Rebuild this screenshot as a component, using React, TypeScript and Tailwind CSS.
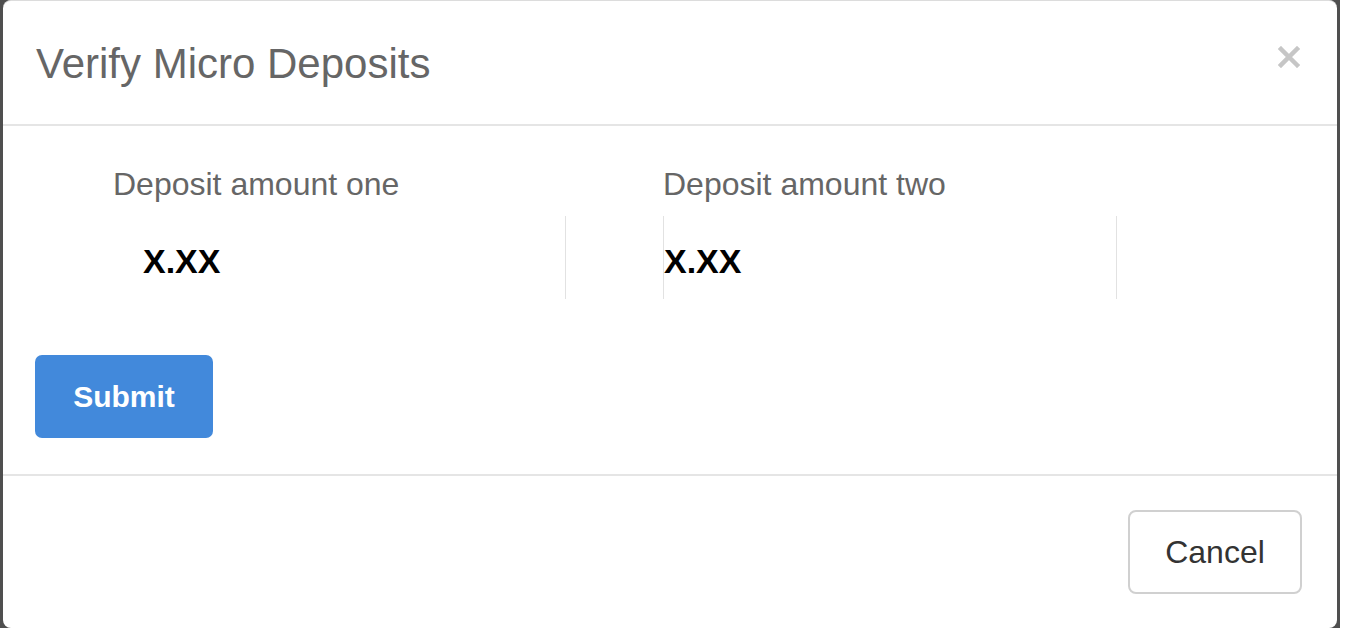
import React from 'react';

const CloseIcon: React.FC = () => (
  <svg width="22" height="22" viewBox="0 0 22 22" className="mt-[3px]">
    <path d="M3 3 L19 19 M19 3 L3 19" stroke="#c6c6c6" strokeWidth="4.5" strokeLinecap="square" />
  </svg>
);

const App: React.FC = () => {
  return (
    <div className="w-[1340px] h-[628px] bg-[#4f4f4f] font-['Liberation_Sans',Arial,sans-serif]">
      <div className="ml-[3px] w-[1334px] h-full bg-white rounded-[8px] border-t border-[#dcdcdc] flex flex-col">
        <div className="h-[125px] border-b-2 border-[#e5e5e5] flex justify-between items-start pt-[42px] pl-[33px] pr-[37px]">
          <h4 className="text-[42px] leading-none text-[#666666]">Verify Micro Deposits</h4>
          <CloseIcon />
        </div>

        <div className="pt-[42px] pb-[36px] pl-[32px]">
          <div className="flex pl-[78px]">
            <div className="w-[550px]">
              <label className="block text-[32px] leading-none text-[#666666]">Deposit amount one</label>
              <div className="mt-[16px] w-[453px] h-[83px] border-r border-[#e2e2e2] pt-[28px] pl-[30px]">
                <span className="text-[34px] leading-none font-bold text-black">X.XX</span>
              </div>
            </div>
            <div className="w-[550px]">
              <label className="block text-[32px] leading-none text-[#666666]">Deposit amount two</label>
              <div className="mt-[16px] w-[454px] h-[83px] border-x border-[#e2e2e2] pt-[28px]">
                <span className="text-[34px] leading-none font-bold text-black">X.XX</span>
              </div>
            </div>
          </div>
          <button className="mt-[56px] w-[178px] h-[83px] rounded-[7px] bg-[#4289db] text-white text-[30px] font-bold">
            Submit
          </button>
        </div>

        <div className="flex-1 border-t-2 border-[#e5e5e5] flex justify-end items-start pt-[34px] pr-[35px]">
          <button className="w-[174px] h-[84px] rounded-[8px] border-2 border-[#d0d0d0] bg-white text-[32px] text-[#333333]">
            Cancel
          </button>
        </div>
      </div>
    </div>
  );
};

export default App;
